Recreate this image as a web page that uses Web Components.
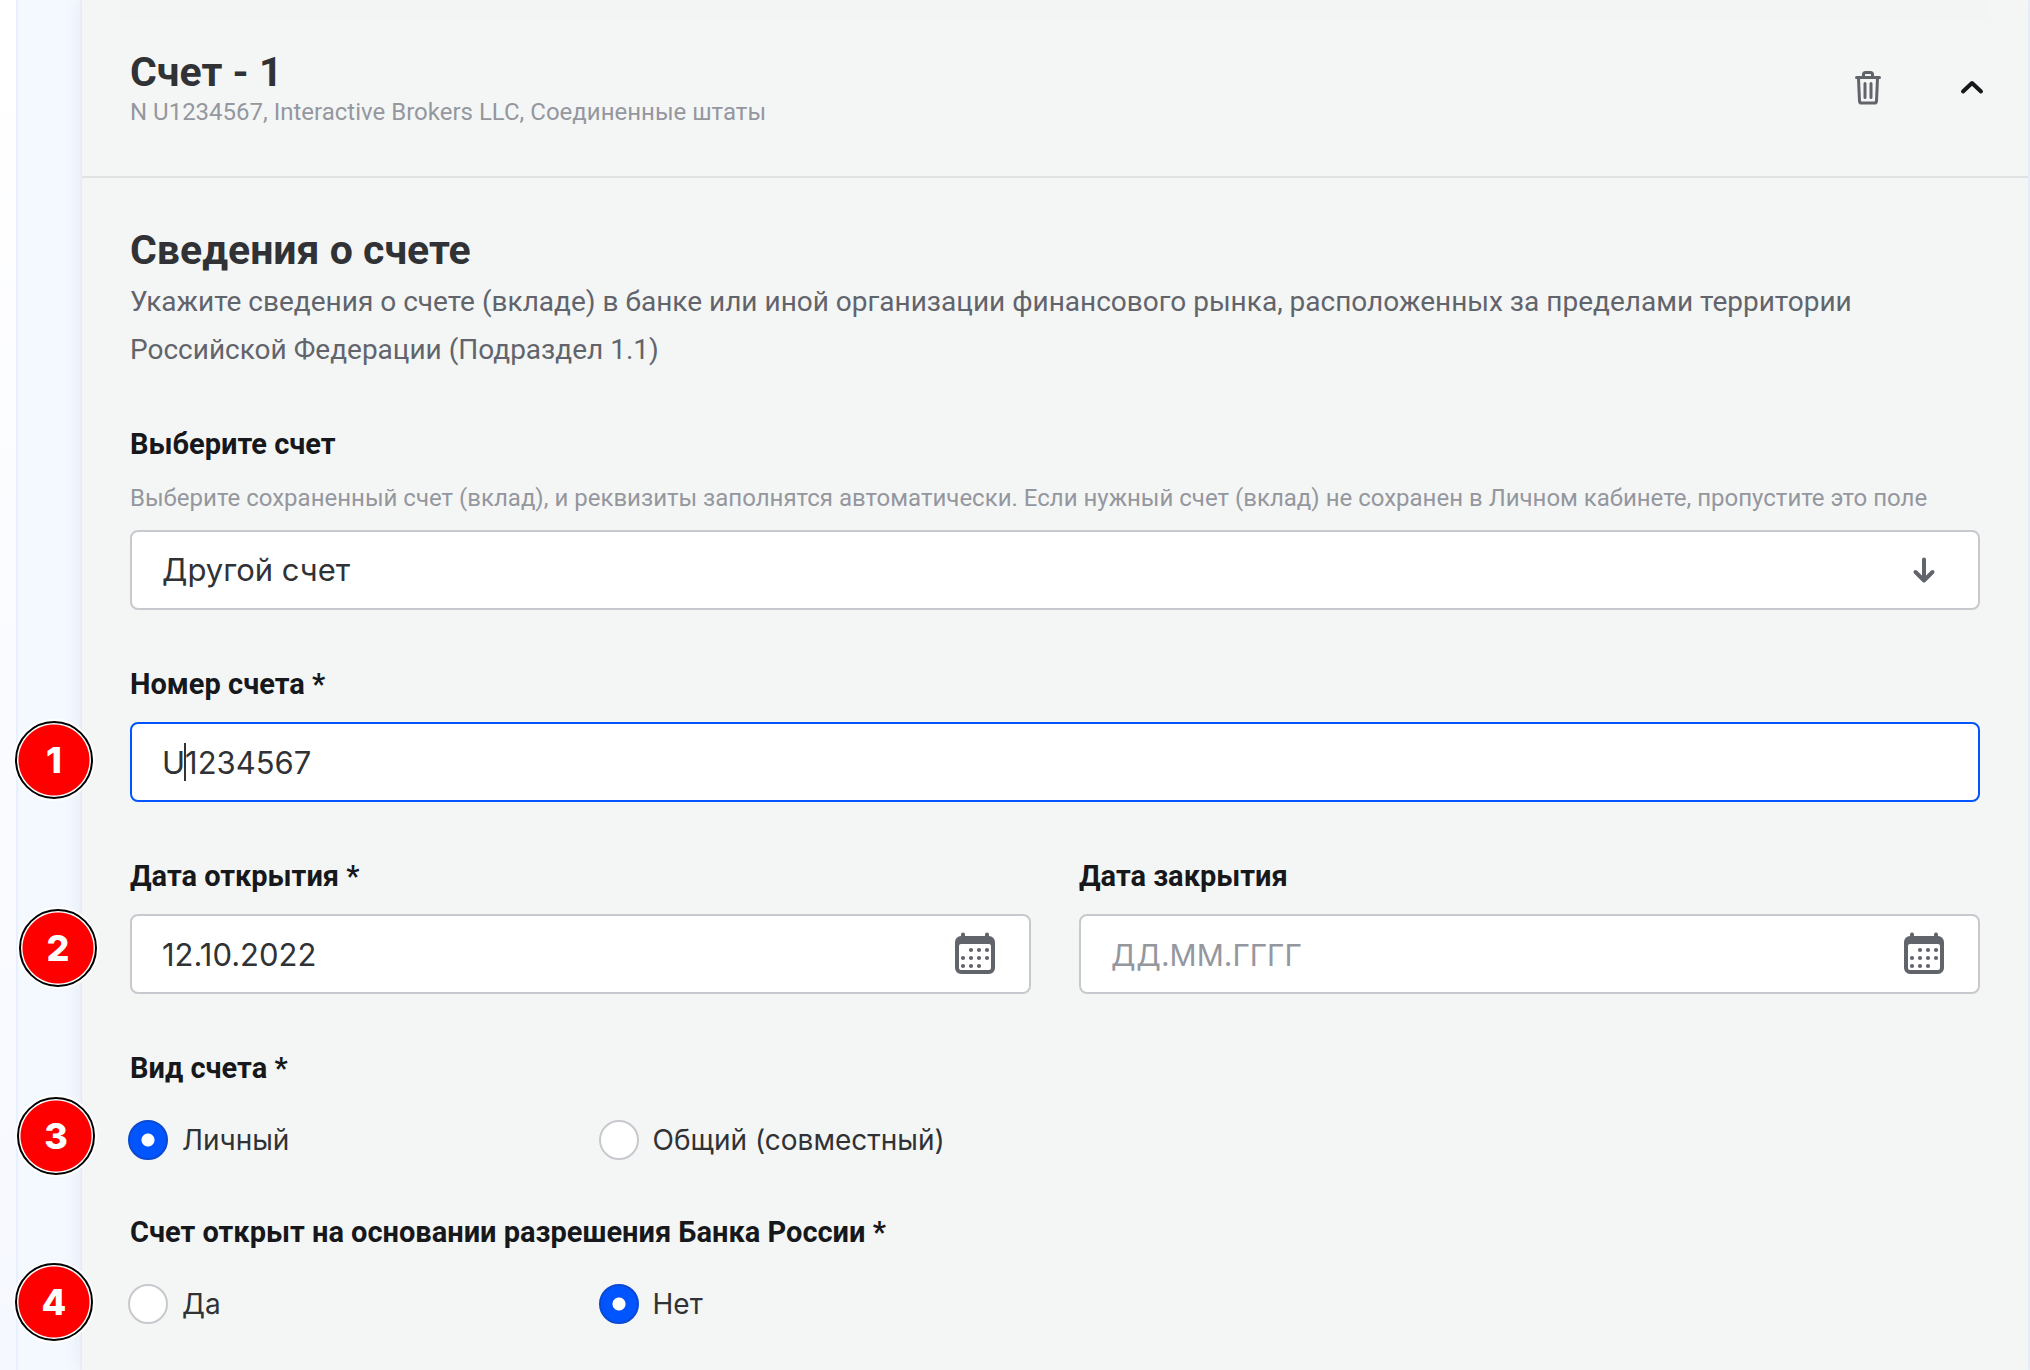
<!DOCTYPE html>
<html lang="ru">
<head>
<meta charset="utf-8">
<title>Сведения о счете</title>
<style>
  body { margin: 0; min-height: 100vh; background: linear-gradient(#fff, #f6f8ff); font-family: Roboto, "Liberation Sans", sans-serif; color: #303236; overflow-x: hidden; }
</style>
</head>
<body>
<account-page>
  <account-card heading="Счет - 1" note="N U1234567, Interactive Brokers LLC, Соединенные штаты">
    <section-intro heading="Сведения о счете">Укажите сведения о счете (вкладе) в банке или иной организации финансового рынка, расположенных за пределами территории Российской Федерации (Подраздел 1.1)</section-intro>
    <select-field label="Выберите счет" hint="Выберите сохраненный счет (вклад), и реквизиты заполнятся автоматически. Если нужный счет (вклад) не сохранен в Личном кабинете, пропустите это поле" value="Другой счет"></select-field>
    <text-field label="Номер счета *" value="U1234567" active>
      <step-badge slot="badge" style="--x:-115px;--y:55px">1</step-badge>
    </text-field>
    <field-row>
      <text-field label="Дата открытия *" value="12.10.2022" calendar>
        <step-badge slot="badge" style="--x:-111px;--y:51px">2</step-badge>
      </text-field>
      <text-field label="Дата закрытия" placeholder="ДД.ММ.ГГГГ" calendar></text-field>
    </field-row>
    <radio-field label="Вид счета *" options="Личный|Общий (совместный)" selected="0">
      <step-badge slot="badge" style="--x:-113px;--y:47px">3</step-badge>
    </radio-field>
    <radio-field label="Счет открыт на основании разрешения Банка России *" options="Да|Нет" selected="1">
      <step-badge slot="badge" style="--x:-115px;--y:49px">4</step-badge>
    </radio-field>
  </account-card>
</account-page>

<script>
const base = `
  *, *::before, *::after { box-sizing: border-box; }
  .label { display: block; padding: 0; margin: 0 0 20px; font-size: 29px; line-height: 36px; font-weight: 700; color: #16181b; }
  .hint { margin: 0 0 16px; font-size: 24px; line-height: 32px; color: #95979f; }
  .box { position: relative; display: flex; align-items: center; }
  .control { width: 100%; height: 80px; margin: 0; padding: 0 30px; border: 2px solid #c8c9ce; border-radius: 8px; background: #fff; color: #303236; font: 400 31px/40px Inter, "Liberation Sans", sans-serif; outline: none; appearance: none; }
  .control::placeholder { font-size: 30px; color: #95979f; opacity: 1; }
  button { display: flex; padding: 0; border: 0; background: none; cursor: pointer; }
  svg { display: block; }
`;

class Base extends HTMLElement {
  connectedCallback() {
    if (this.shadowRoot) return;
    this.attachShadow({ mode: 'open' }).innerHTML = `<style>${base}${this.css()}</style>${this.html()}`;
  }
  attr(name) { return this.getAttribute(name) || ''; }
}

customElements.define('account-page', class extends Base {
  css() { return `
    :host { display: block; margin-left: 16px; padding: 0 2px 0 64px; border-left: 2px solid #e8effe; background: #f4f8ff; }`; }
  html() { return `<slot></slot>`; }
});

customElements.define('account-card', class extends Base {
  css() { return `
    :host { display: block; min-height: 100vh; background: #f4f6f5; box-shadow: 0 0 2px 1px #e4e7f0, 0 0 20px rgba(40, 60, 110, .08); }
    header { display: flex; align-items: flex-start; justify-content: space-between; padding: 48px 40px 48px 48px; border-bottom: 2px solid #e0e3e3; background: linear-gradient(#f3f5f4, #f3f5f4) 38px 0 / calc(100% - 76px) 20px no-repeat; }
    h2 { margin: 0; font-size: 41px; line-height: 48px; font-weight: 700; }
    p { margin: 0; font-size: 24px; line-height: 32px; color: #95979f; }
    .actions { display: flex; align-items: center; gap: 68px; padding-top: 20px; }
    main { display: flex; flex-direction: column; gap: 56px; padding: 48px; }`; }
  html() { return `
    <header>
      <div><h2>${this.attr('heading')}</h2><p>${this.attr('note')}</p></div>
      <div class="actions">
        <button type="button" aria-label="Удалить"><svg width="40" height="40" viewBox="0 0 40 40" fill="none" stroke="#62646c" stroke-width="3" stroke-linecap="round" stroke-linejoin="round"><path d="M8.500 9.500H31.500M15.500 9V6.500Q15.500 4.500 17.500 4.500H22.500Q24.500 4.500 24.500 6.500V9M10.500 10.500L11.500 33Q11.700 35 13.500 35H26.500Q28.300 35 28.500 33L29.500 10.500M17 15.500V29.500M23 15.500V29.500"/></svg></button>
        <button type="button" aria-label="Свернуть"><svg width="32" height="40" viewBox="0 0 32 40" fill="none" stroke="#16181b" stroke-width="4" stroke-linecap="round" stroke-linejoin="round"><path d="M7 23.500L16 15L25 23.500"/></svg></button>
      </div>
    </header>
    <main><slot></slot></main>`; }
});

customElements.define('section-intro', class extends Base {
  css() { return `
    :host { display: block; margin-bottom: -4px; }
    h3 { margin: 0 0 4px; font-size: 41px; line-height: 48px; font-weight: 700; }
    p { margin: 0; font-size: 28px; line-height: 48px; color: #62646c; }`; }
  html() { return `<h3>${this.attr('heading')}</h3><p><slot></slot></p>`; }
});

customElements.define('select-field', class extends Base {
  css() { return `
    :host { display: block; }
    svg { position: absolute; right: 36px; pointer-events: none; }`; }
  html() { return `
    <label class="label" for="c">${this.attr('label')}</label>
    <p class="hint" id="h">${this.attr('hint')}</p>
    <div class="box">
      <select class="control" id="c" aria-describedby="h"><option>${this.attr('value')}</option></select>
      <svg width="40" height="40" viewBox="0 0 40 40" fill="none" stroke="#62646c" stroke-width="4" stroke-linecap="round" stroke-linejoin="round"><path d="M20 9.500V30M11.500 22L20 30.500L28.500 22"/></svg>
    </div>`; }
});

customElements.define('text-field', class extends Base {
  css() { return `
    :host { display: block; position: relative; flex: 1 1 0; min-width: 0; }
    :host([active]) .control { border-color: #0055ff; }
    .caret { position: absolute; left: 54px; width: 2px; height: 38px; background: #303236; }
    .box button { position: absolute; right: 34px; }`; }
  html() {
    const dots = [[20, 16], [28, 16], [36, 16], [12, 24], [20, 24], [28, 24], [36, 24], [12, 32], [20, 32], [28, 32]]
      .map(([x, y]) => `<circle cx="${x}" cy="${y + 2}" r="2.100"/>`).join('');
    return `
    <label class="label" for="c">${this.attr('label')}</label>
    <div class="box">
      <input class="control" id="c" type="text" value="${this.attr('value')}" placeholder="${this.attr('placeholder')}">
      ${this.hasAttribute('active') ? '<span class="caret"></span>' : ''}
      ${this.hasAttribute('calendar') ? `<button type="button" aria-label="Календарь"><svg width="44" height="44" viewBox="2 0 44 44" fill="#62646c"><path fill-rule="evenodd" d="M10 4V2.500a2 2 0 0 1 4 0V4H34V2.500a2 2 0 0 1 4 0V4.100A6 6 0 0 1 44 10V36A6 6 0 0 1 38 42H10A6 6 0 0 1 4 36V10A6 6 0 0 1 10 4.100ZM8 14V36Q8 38 10 38H38Q40 38 40 36V14Q40 12 38 12H10Q8 12 8 14Z"/>${dots}</svg></button>` : ''}
    </div>
    <slot name="badge"></slot>`; }
});

customElements.define('field-row', class extends Base {
  css() { return `:host { display: flex; gap: 48px; }`; }
  html() { return `<slot></slot>`; }
});

customElements.define('radio-field', class extends Base {
  css() { return `
    :host { display: block; position: relative; }
    fieldset { min-width: 0; margin: 0; padding: 0; border: 0; }
    .label { margin-bottom: 36px; }
    .options { display: grid; grid-template-columns: repeat(4, 1fr); gap: 32px; }
    .options label { display: flex; align-items: center; gap: 16px; font: 400 28px/36px Inter, "Liberation Sans", sans-serif; white-space: nowrap; }
    input { flex: none; width: 40px; height: 40px; margin: -2px; border: 2px solid #c8c9ce; border-radius: 50%; background: #fff; appearance: none; }
    input:checked { border-color: #0a49d0; background: radial-gradient(circle, #fff 6px, #0055ff 7px); }`; }
  html() {
    const picked = Number(this.attr('selected'));
    return `
    <fieldset>
      <legend class="label">${this.attr('label')}</legend>
      <div class="options">${this.attr('options').split('|').map((text, i) =>
        `<label><input type="radio" name="choice"${i === picked ? ' checked' : ''}>${text}</label>`).join('')}</div>
    </fieldset>
    <slot name="badge"></slot>`; }
});

customElements.define('step-badge', class extends Base {
  css() { return `
    :host { position: absolute; left: var(--x); top: var(--y); box-sizing: border-box; display: flex; align-items: center; justify-content: center; width: 78px; height: 78px; border: 2px solid #000; border-radius: 50%; background: radial-gradient(circle, #f00 35px, #fff 36px); box-shadow: 0 0 0 2px #fff; color: #fff; font: 800 36px/40px Inter, "Liberation Sans", sans-serif; }`; }
  html() { return `<slot></slot>`; }
});
</script>
</body>
</html>
